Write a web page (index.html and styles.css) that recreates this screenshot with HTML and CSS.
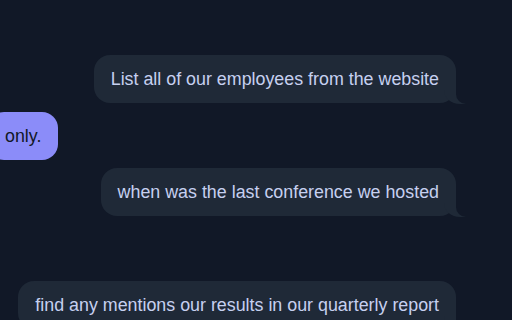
FILE: index.html
```html
<!DOCTYPE html>
<html lang="en">
<head>
    <meta charset="UTF-8">
    <meta name="viewport" content="width=device-width, initial-scale=1.0">
    <title>Chat</title>
    <link rel="stylesheet" href="styles.css">
</head>
<body>
    <div class="chat">
        <div class="message sent">List all of our employees from the website</div>
        <div class="message received">only.</div>
        <div class="message sent">when was the last conference we hosted</div>
        <div class="message sent last">find any mentions our results in our quarterly report</div>
    </div>
</body>
</html>
```

FILE: styles.css
```css
* {
    margin: 0;
    padding: 0;
    box-sizing: border-box;
}

body {
    font-family: 'Liberation Sans', Arial, sans-serif;
    background: #111827;
    height: 100vh;
    overflow: hidden;
}

.chat {
    display: flex;
    flex-direction: column;
    padding: 55px 56px 0 0;
    gap: 8px;
}

.message {
    position: relative;
    padding: 12px 17px;
    border-radius: 16px;
    font-size: 17.85px;
    line-height: 24px;
    white-space: nowrap;
}

.message.sent {
    align-self: flex-end;
    background: #1f2937;
    color: #c6d0f0;
}

/* bubble tail */
.message.sent::before {
    content: "";
    position: absolute;
    bottom: -1px;
    right: -10px;
    width: 22px;
    height: 20px;
    background: #1f2937;
    border-bottom-left-radius: 16px 14px;
}

.message.sent::after {
    content: "";
    position: absolute;
    bottom: -1px;
    right: -26px;
    width: 26px;
    height: 21px;
    background: #111827;
    border-bottom-left-radius: 10px;
}

.message.received {
    align-self: flex-start;
    margin: 1px 0 0 -12px;
    background: #8b8cf9;
    color: #111827;
}

.message.last {
    margin-top: 57px;
}
```
